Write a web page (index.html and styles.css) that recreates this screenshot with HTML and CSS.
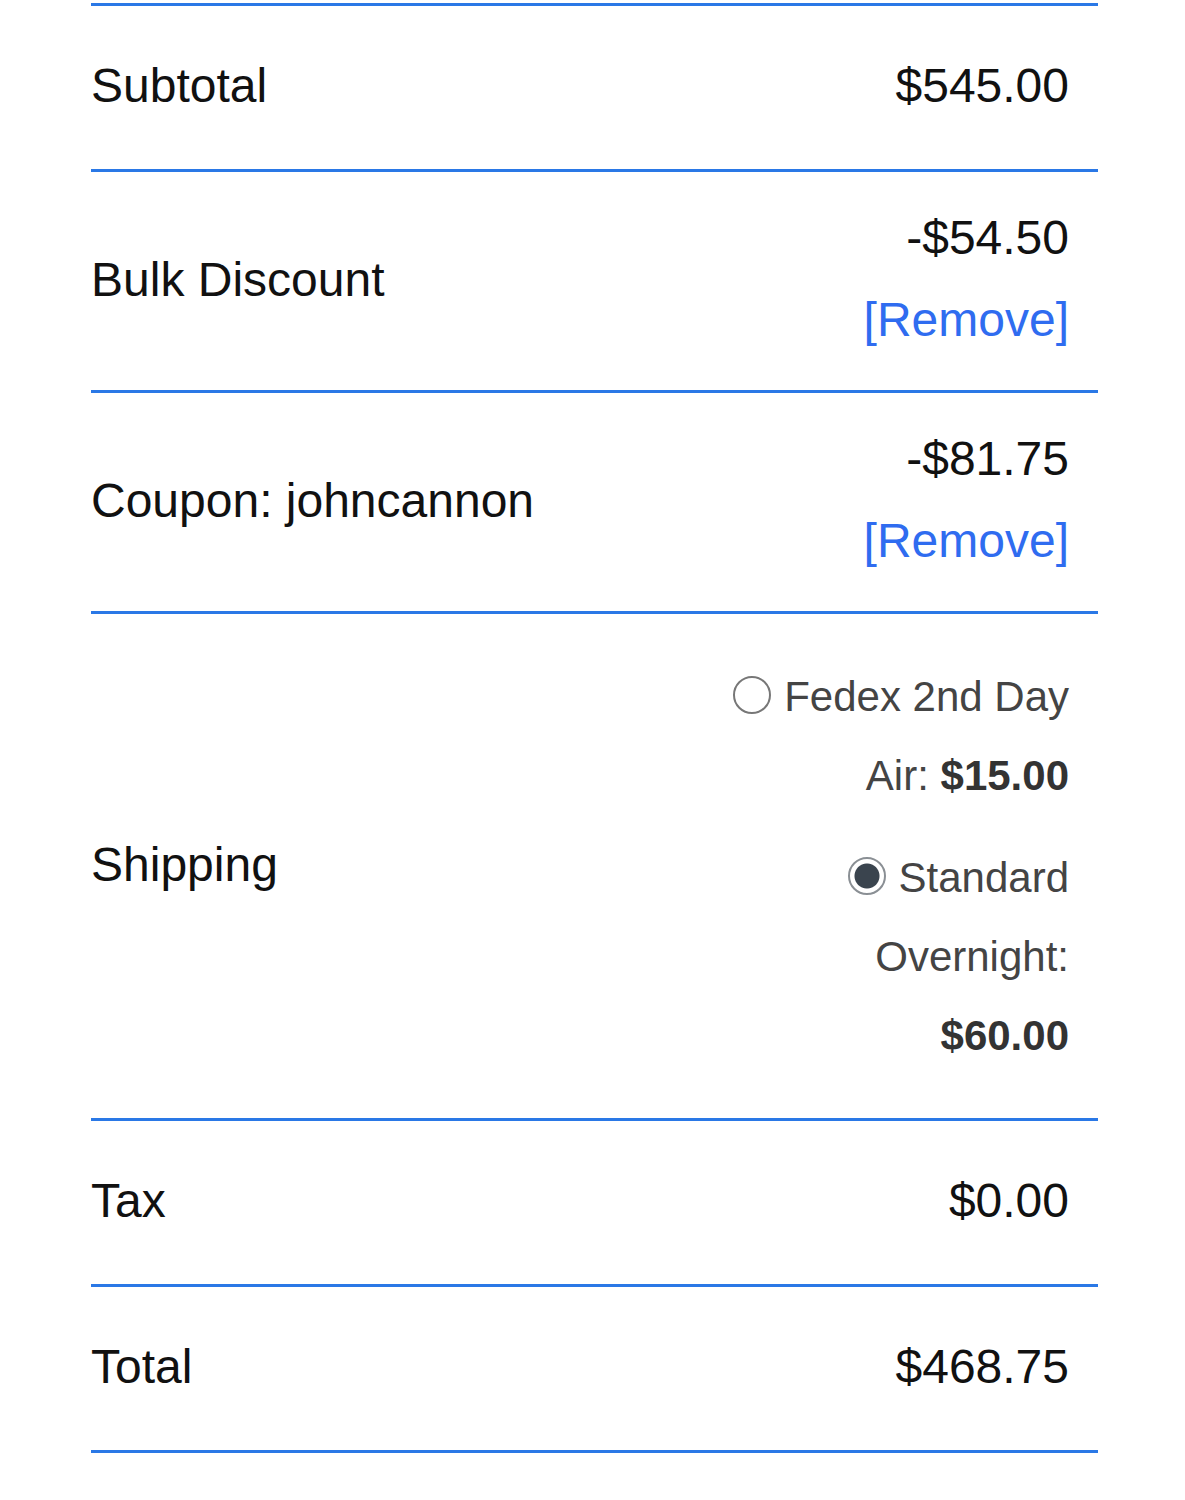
FILE: index.html
```html
<!DOCTYPE html>
<html lang="en">
<head>
    <meta charset="UTF-8">
    <title>Cart Totals</title>
    <link rel="stylesheet" href="styles.css">
</head>
<body>
    <div class="totals">
        <div class="row">
            <div class="label">Subtotal</div>
            <div class="value">$545.00</div>
        </div>

        <div class="row">
            <div class="label">Bulk Discount</div>
            <div class="value stacked">
                <div>-$54.50</div>
                <a href="#" class="remove">[Remove]</a>
            </div>
        </div>

        <div class="row">
            <div class="label">Coupon: johncannon</div>
            <div class="value stacked">
                <div>-$81.75</div>
                <a href="#" class="remove">[Remove]</a>
            </div>
        </div>

        <!-- Shipping options -->
        <div class="row shipping">
            <div class="label">Shipping</div>
            <ul class="methods">
                <li>
                    <label><span class="radio"></span>Fedex 2nd Day<br>Air: <strong>$15.00</strong></label>
                </li>
                <li>
                    <label><span class="radio checked"></span>Standard<br>Overnight:<br><strong>$60.00</strong></label>
                </li>
            </ul>
        </div>

        <div class="row">
            <div class="label">Tax</div>
            <div class="value">$0.00</div>
        </div>

        <div class="row">
            <div class="label">Total</div>
            <div class="value">$468.75</div>
        </div>
    </div>
</body>
</html>
```

FILE: styles.css
```css
body {
    margin: 0;
    font-family: "Liberation Sans", Arial, sans-serif;
    background-color: #fff;
    color: #111;
}
.totals {
    width: 1007px;
    margin: 3px 0 0 91px;
    border-top: 3px solid #2a78e6;
}
.row {
    display: flex;
    justify-content: space-between;
    align-items: center;
    min-height: 109px;
    padding: 25px 29px 29px 0;
    border-bottom: 3px solid #2a78e6;
    font-size: 48px;
    line-height: 55px;
}
.value {
    text-align: right;
}
.stacked {
    line-height: 82px;
}
.remove {
    display: block;
    color: #2f6cf0;
    text-decoration: none;
}
.methods {
    list-style: none;
    margin: 18px 0 14px;
    padding: 0;
    text-align: right;
    font-size: 42px;
    line-height: 79px;
    color: #444;
}
.methods li {
    margin-bottom: 23px;
}
.methods li:last-child {
    margin-bottom: 0;
}
.methods strong {
    color: #333;
}
.radio {
    display: inline-block;
    width: 38px;
    height: 38px;
    margin-right: 13px;
    border: 2px solid #777;
    border-radius: 50%;
    box-sizing: border-box;
    vertical-align: -3px;
    background: #fff;
}
.radio.checked {
    border-color: #8a8f94;
    background: radial-gradient(circle, #3a444e 0 12px, #fff 13px);
}
```
